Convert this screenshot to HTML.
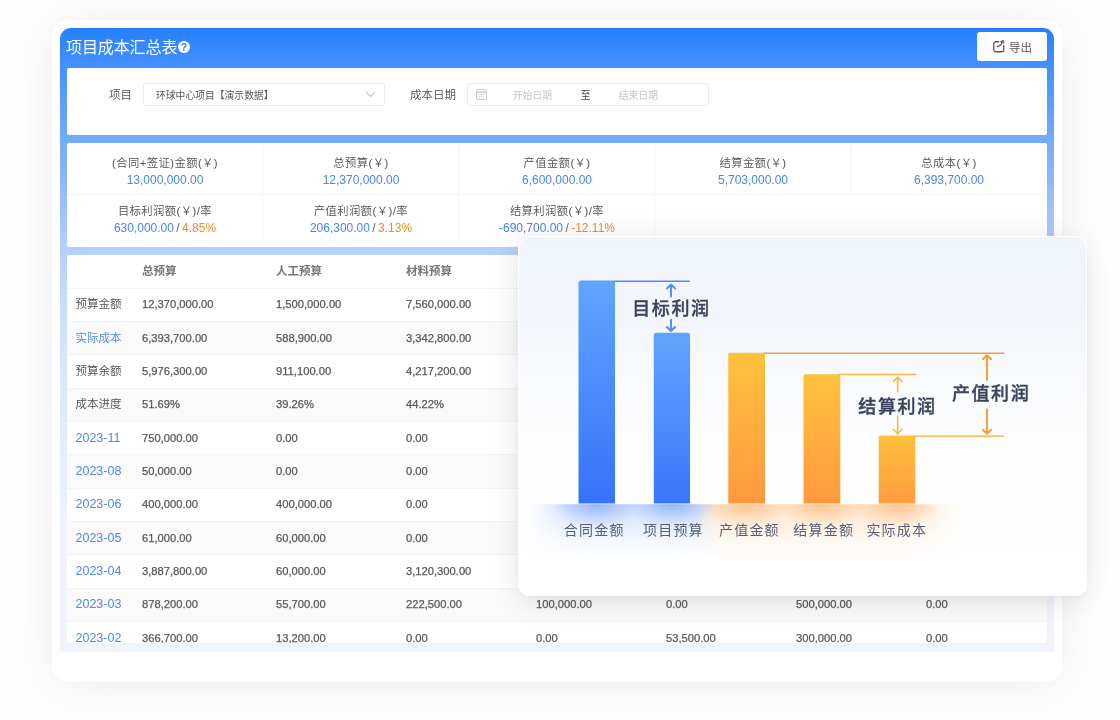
<!DOCTYPE html>
<html lang="zh-CN">
<head>
<meta charset="utf-8">
<title>项目成本汇总表</title>
<style>
*{box-sizing:border-box;margin:0;padding:0}
html,body{width:1120px;height:720px;overflow:hidden;background:#fefefe}
body{position:relative;font-family:"Liberation Sans","Noto Sans CJK SC",sans-serif;color:#555;-webkit-font-smoothing:antialiased}
.abs{position:absolute}
#outer{left:52px;top:20px;width:1010px;height:662px;border-radius:16px;background:#fff;box-shadow:0 3px 50px rgba(0,0,0,.082)}
#panel{left:60px;top:28px;width:994px;height:624px;border-radius:11px 11px 0 0;
 background:linear-gradient(180deg,#2580fe 0px,#4691fd 40px,#74abfb 112px,#b6d0fa 222px,#c5d9fb 262px,#d9e5fb 332px,#e0e9fb 380px,#e9effc 450px,#eef3fc 500px,#f0f4fc 624px)}
#title{left:66px;top:36.3px;height:24px;line-height:24px;font-size:16px;color:#fff;white-space:nowrap;letter-spacing:-.1px}
#help{left:178px;top:41px;width:12px;height:12px;border-radius:50%;background:#fff;color:#2f80fd;font-size:10.5px;font-weight:bold;line-height:12.5px;text-align:center}
#export{left:977px;top:32px;width:70px;height:29px;border-radius:3px;background:#fff;color:#555;font-size:11.5px}
#export span{position:absolute;left:32px;top:1.5px;line-height:29px}
#export svg{position:absolute;left:15px;top:7px}
.card{background:#fff;border-radius:2px}
#filter{left:67px;top:68px;width:980px;height:67px}
.lbl{font-size:11.5px;color:#4f4f4f;font-weight:350;line-height:22px;white-space:nowrap}
.inp{border:1px solid #eaecf0;border-radius:3px;height:23px;background:#fff}
.inp span{position:absolute;top:1px;line-height:21px;font-size:9.8px;white-space:nowrap;text-spacing-trim:space-all;font-kerning:none}
#stats{left:67px;top:143px;width:980px;height:104px}
.st{position:absolute;width:196px;text-align:center;white-space:nowrap}
.st .l{position:absolute;left:0;width:100%;font-size:11.3px;color:#505050;font-weight:350;line-height:16px;letter-spacing:.45px}
.st .v{position:absolute;left:0;width:100%;font-size:12px;color:#4a84f2;line-height:16px}
.st .v i{font-style:normal;color:#666}
.st .v b{font-weight:normal;color:#f38a26}
.vline{position:absolute;top:0;width:1px;background:#f5f6f8}
#table{left:67px;top:255px;width:980px;height:388px;overflow:hidden}
.row{position:absolute;left:0;width:980px;height:33.33px;border-top:1px solid #f3f4f5}
.row.g{background:#fafafa}
.row span{position:absolute;top:-.4px;line-height:33px;font-size:11.2px;color:#585858;white-space:nowrap;-webkit-text-stroke:.25px #585858}
.row span.h{font-weight:bold;color:#777;font-size:11.5px;-webkit-text-stroke:0}
.row span.k{left:8.5px;font-size:11.5px;-webkit-text-stroke:0;font-weight:350;color:#4f4f4f}
.row span.d{left:8.5px;font-size:12.5px;color:#4a86f5;-webkit-text-stroke:0}
.row span.b{color:#4a86f5}
.c1{left:75px}.c2{left:209px}.c3{left:339px}.c4{left:469px}.c5{left:599px}.c6{left:729px}.c7{left:859px}
#ov{left:517.6px;top:236px;width:569px;height:359.6px;border-radius:12px;border:1.6px solid #fff;
 background:linear-gradient(180deg,#f0f4fc 0,#f3f6fb 25%,#fafbfd 45%,#fefefe 60%,#fff 100%);
 box-shadow:0 5px 32px rgba(0,0,0,.11),0 2px 8px rgba(0,0,0,.03)}
#chart{left:518px;top:237px}
</style>
</head>
<body>
<div id="root" style="position:absolute;left:0;top:0;width:1120px;height:720px;will-change:transform;opacity:.9999">
<div id="outer" class="abs"></div>
<div id="panel" class="abs"></div>
<div id="title" class="abs">项目成本汇总表</div>
<div id="help" class="abs">?</div>
<div id="export" class="abs">
<svg width="14" height="14" viewBox="0 0 14 14" fill="none" stroke="#585858" stroke-width="1.3" stroke-linecap="round" stroke-linejoin="round"><path d="M6.8 2.75H3.75a2 2 0 0 0-2 2V10.75a2 2 0 0 0 2 2H9.75a2 2 0 0 0 2-2V6.6"/><path d="M5.4 7.5C7.6 7.2 9.3 5.7 10 3.4"/><path d="M8.5 2.4L11.3 1.2L12 4.1z" fill="#585858" stroke-width=".6"/></svg>
<span>导出</span></div>

<div id="filter" class="abs card">
 <div class="abs lbl" style="left:42px;top:16px">项目</div>
 <div class="abs inp" style="left:76px;top:15.3px;width:241.7px">
  <span style="left:12px;color:#555">环球中心项目【演示数据】</span>
  <svg class="abs" style="left:221px;top:6.7px" width="11" height="7" viewBox="0 0 11 7" fill="none" stroke="#c0c4cc" stroke-width="1.1"><path d="M1 1.2L5.5 5.4L10 1.2"/></svg>
 </div>
 <div class="abs lbl" style="left:343px;top:16px">成本日期</div>
 <div class="abs inp" style="left:399.8px;top:15.3px;width:242.2px">
  <svg class="abs" style="left:8px;top:5px" width="11" height="11" viewBox="0 0 11 11" fill="none" stroke="#c3c7cf" stroke-width="1"><rect x=".5" y=".8" width="10" height="9.6" rx=".8"/><path d="M.5 3.2H10.5" stroke-width="1.3"/><path d="M2.6 5.6H8.4M2.6 7.8H8.4" stroke-dasharray="1.4 .8" stroke-width=".9"/></svg>
  <span style="left:45px;color:#c3c6cc">开始日期</span>
  <span style="left:113px;color:#444">至</span>
  <span style="left:151px;color:#c3c6cc">结束日期</span>
 </div>
</div>

<div id="stats" class="abs card">
 <div class="vline" style="left:195px;height:103px"></div>
 <div class="vline" style="left:391px;height:103px"></div>
 <div class="vline" style="left:587px;height:103px"></div>
 <div class="vline" style="left:783px;height:52px"></div>
 <div class="abs" style="left:0;top:51px;width:980px;height:1px;background:#f5f6f8"></div>
 <div class="st" style="left:0;top:0"><div class="l" style="top:12px">(合同+签证)金额(￥)</div><div class="v" style="top:29px">13,000,000.00</div></div>
 <div class="st" style="left:196px;top:0"><div class="l" style="top:12px">总预算(￥)</div><div class="v" style="top:29px">12,370,000.00</div></div>
 <div class="st" style="left:392px;top:0"><div class="l" style="top:12px">产值金额(￥)</div><div class="v" style="top:29px">6,600,000.00</div></div>
 <div class="st" style="left:588px;top:0"><div class="l" style="top:12px">结算金额(￥)</div><div class="v" style="top:29px">5,703,000.00</div></div>
 <div class="st" style="left:784px;top:0"><div class="l" style="top:12px">总成本(￥)</div><div class="v" style="top:29px">6,393,700.00</div></div>
 <div class="st" style="left:0;top:0"><div class="l" style="top:60px">目标利润额(￥)/率</div><div class="v" style="top:77px">630,000.00<i>&#8201;/&#8201;</i><b>4.85%</b></div></div>
 <div class="st" style="left:196px;top:0"><div class="l" style="top:60px">产值利润额(￥)/率</div><div class="v" style="top:77px">206,300.00<i>&#8201;/&#8201;</i><b>3.13%</b></div></div>
 <div class="st" style="left:392px;top:0"><div class="l" style="top:60px">结算利润额(￥)/率</div><div class="v" style="top:77px">-690,700.00<i>&#8201;/&#8201;</i><b>-12.11%</b></div></div>
</div>

<div id="table" class="abs card">
 <div class="row" style="top:0;border-top:0"><span class="h c1">总预算</span><span class="h c2">人工预算</span><span class="h c3">材料预算</span><span class="h c4">机械预算</span><span class="h c5">分包预算</span><span class="h c6">间接费预算</span><span class="h c7">其他预算</span></div>
 <div class="row" style="top:32.60px"><span class="k">预算金额</span><span class="c1">12,370,000.00</span><span class="c2">1,500,000.00</span><span class="c3">7,560,000.00</span><span class="c4">850,000.00</span><span class="c5">1,460,000.00</span><span class="c6">1,000,000.00</span><span class="c7">0.00</span></div>
 <div class="row g" style="top:65.93px"><span class="k b">实际成本</span><span class="c1">6,393,700.00</span><span class="c2">588,900.00</span><span class="c3">3,342,800.00</span><span class="c4">308,500.00</span><span class="c5">853,500.00</span><span class="c6">1,300,000.00</span><span class="c7">0.00</span></div>
 <div class="row" style="top:99.26px"><span class="k">预算余额</span><span class="c1">5,976,300.00</span><span class="c2">911,100.00</span><span class="c3">4,217,200.00</span><span class="c4">541,500.00</span><span class="c5">606,500.00</span><span class="c6">-300,000.00</span><span class="c7">0.00</span></div>
 <div class="row g" style="top:132.59px"><span class="k">成本进度</span><span class="c1">51.69%</span><span class="c2">39.26%</span><span class="c3">44.22%</span><span class="c4">36.29%</span><span class="c5">58.46%</span><span class="c6">130.00%</span><span class="c7">0.00%</span></div>
 <div class="row" style="top:165.92px"><span class="d">2023-11</span><span class="c1">750,000.00</span><span class="c2">0.00</span><span class="c3">0.00</span><span class="c4">0.00</span><span class="c5">750,000.00</span><span class="c6">0.00</span><span class="c7">0.00</span></div>
 <div class="row g" style="top:199.25px"><span class="d">2023-08</span><span class="c1">50,000.00</span><span class="c2">0.00</span><span class="c3">0.00</span><span class="c4">0.00</span><span class="c5">50,000.00</span><span class="c6">0.00</span><span class="c7">0.00</span></div>
 <div class="row" style="top:232.58px"><span class="d">2023-06</span><span class="c1">400,000.00</span><span class="c2">400,000.00</span><span class="c3">0.00</span><span class="c4">0.00</span><span class="c5">0.00</span><span class="c6">0.00</span><span class="c7">0.00</span></div>
 <div class="row g" style="top:265.91px"><span class="d">2023-05</span><span class="c1">61,000.00</span><span class="c2">60,000.00</span><span class="c3">0.00</span><span class="c4">1,000.00</span><span class="c5">0.00</span><span class="c6">0.00</span><span class="c7">0.00</span></div>
 <div class="row" style="top:299.24px"><span class="d">2023-04</span><span class="c1">3,887,800.00</span><span class="c2">60,000.00</span><span class="c3">3,120,300.00</span><span class="c4">207,500.00</span><span class="c5">0.00</span><span class="c6">500,000.00</span><span class="c7">0.00</span></div>
 <div class="row g" style="top:332.57px"><span class="d">2023-03</span><span class="c1">878,200.00</span><span class="c2">55,700.00</span><span class="c3">222,500.00</span><span class="c4">100,000.00</span><span class="c5">0.00</span><span class="c6">500,000.00</span><span class="c7">0.00</span></div>
 <div class="row" style="top:365.90px"><span class="d">2023-02</span><span class="c1">366,700.00</span><span class="c2">13,200.00</span><span class="c3">0.00</span><span class="c4">0.00</span><span class="c5">53,500.00</span><span class="c6">300,000.00</span><span class="c7">0.00</span></div>
</div>

<div id="ov" class="abs"></div>
<svg id="chart" class="abs" width="569" height="359" viewBox="518 237 569 359">
<defs>
<linearGradient id="gb" x1="0" y1="0" x2="0" y2="1"><stop offset="0" stop-color="#5fa5fd"/><stop offset="1" stop-color="#3672fb"/></linearGradient>
<linearGradient id="gb2" x1="0" y1="0" x2="0" y2="1"><stop offset="0" stop-color="#5fa5fd"/><stop offset="1" stop-color="#3a76fb"/></linearGradient>
<linearGradient id="go" x1="0" y1="0" x2="0" y2="1"><stop offset="0" stop-color="#ffc23b"/><stop offset="1" stop-color="#ff9840"/></linearGradient>
<linearGradient id="go5" x1="0" y1="0" x2="0" y2="1"><stop offset="0" stop-color="#ffc03b"/><stop offset="1" stop-color="#ff9c40"/></linearGradient>
<linearGradient id="gl" x1="0" y1="0" x2="1" y2="0"><stop offset="0" stop-color="#5b8ffb"/><stop offset=".385" stop-color="#5b8ffb"/><stop offset=".44" stop-color="#ffa24a"/><stop offset="1" stop-color="#ffa24a"/></linearGradient>
<linearGradient id="mv" x1="0" y1="0" x2="0" y2="1"><stop offset="0" stop-color="#fff" stop-opacity=".30"/><stop offset=".35" stop-color="#fff" stop-opacity=".17"/><stop offset=".7" stop-color="#fff" stop-opacity=".06"/><stop offset="1" stop-color="#fff" stop-opacity="0"/></linearGradient>
<linearGradient id="mh" x1="0" y1="0" x2="1" y2="0"><stop offset="0" stop-color="#000"/><stop offset=".10" stop-color="#fff"/><stop offset=".88" stop-color="#fff"/><stop offset="1" stop-color="#000"/></linearGradient>
<mask id="mk1" maskUnits="userSpaceOnUse" x="528" y="504" width="432" height="54"><rect x="528" y="504" width="432" height="54" fill="url(#mv)"/></mask>
<mask id="mk2" maskUnits="userSpaceOnUse" x="528" y="504" width="432" height="54"><rect x="528" y="504" width="432" height="54" fill="url(#mh)"/></mask>
<radialGradient id="rb"><stop offset="0" stop-color="#4d84fb" stop-opacity=".45"/><stop offset=".5" stop-color="#4d84fb" stop-opacity=".2"/><stop offset="1" stop-color="#4d84fb" stop-opacity="0"/></radialGradient>
<radialGradient id="ro"><stop offset="0" stop-color="#ff9a3e" stop-opacity=".45"/><stop offset=".5" stop-color="#ff9a3e" stop-opacity=".2"/><stop offset="1" stop-color="#ff9a3e" stop-opacity="0"/></radialGradient>
<clipPath id="cp"><rect x="518" y="504.3" width="569" height="80"/></clipPath>
</defs>
<g clip-path="url(#cp)">
<g mask="url(#mk2)"><g mask="url(#mk1)"><rect x="528" y="504" width="432" height="54" fill="url(#gl)"/></g></g>
<ellipse cx="596.8" cy="504" rx="44" ry="24" fill="url(#rb)"/>
<ellipse cx="671.8" cy="504" rx="44" ry="24" fill="url(#rb)"/>
<ellipse cx="746.8" cy="504" rx="44" ry="24" fill="url(#ro)"/>
<ellipse cx="821.8" cy="504" rx="44" ry="24" fill="url(#ro)"/>
<ellipse cx="896.8" cy="504" rx="44" ry="24" fill="url(#ro)"/>
</g>
<path d="M578.5 503.6V283.0a2.5 2.5 0 0 1 2.5-2.5H612.5a2.5 2.5 0 0 1 2.5 2.5V503.6z" fill="url(#gb)"/>
<path d="M653.8 503.6V335.2a2.5 2.5 0 0 1 2.5-2.5H687.5a2.5 2.5 0 0 1 2.5 2.5V503.6z" fill="url(#gb2)"/>
<path d="M728.3 503.6V353.8a1 1 0 0 1 1-1H764a1 1 0 0 1 1 1V503.6z" fill="url(#go)"/>
<path d="M803.5 503.6V376.2a2 2 0 0 1 2-2H838.3a2 2 0 0 1 2 2V503.6z" fill="url(#go)"/>
<path d="M878.7 503.6V436.9a1.5 1.5 0 0 1 1.5-1.5H913.8a1.5 1.5 0 0 1 1.5 1.5V503.6z" fill="url(#go5)"/>
<g fill="none" stroke-linecap="round" stroke-linejoin="round">
<path d="M614 281.3H689.2" stroke="#4a8bfb" stroke-width="1.4"/>
<g stroke="#4a8bfb" stroke-width="1.9"><path d="M671.0 296.6V284.5M666.9 288.5L671.0 284.5L675.1 288.5"/><path d="M671.0 319.6V331.0M666.9 327.0L671.0 331.0L675.1 327.0"/></g>
<path d="M764 353.2H1003.8" stroke="#f99f30" stroke-width="1.4"/>
<path d="M914.5 436.1H1003.8" stroke="#fbaa34" stroke-width="1.4"/>
<path d="M839 374.5H915.6" stroke="#fbb83c" stroke-width="1.4"/>
<g stroke="#fbb93a" stroke-width="1.6"><path d="M897.7 391.8V377.3M893.4 381.5L897.7 377.3L902.0 381.5"/><path d="M897.7 416.2V433.7M893.4 429.5L897.7 433.7L902.0 429.5"/></g>
<g stroke="#f99b2d" stroke-width="1.9"><path d="M987.0 379.8V355.2M982.9 359.2L987.0 355.2L991.1 359.2"/><path d="M987.0 409.1V433.7M982.9 429.7L987.0 433.7L991.1 429.7"/></g>
</g>
<g font-family="'Liberation Sans','Noto Sans CJK SC',sans-serif" font-weight="500" fill="#3b435f" stroke="#3b435f" stroke-width=".35" font-size="18" letter-spacing="1.6">
<text x="632.2" y="315.2">目标利润</text>
<text x="858.3" y="412.7">结算利润</text>
<text x="951.9" y="400.2">产值利润</text>
</g>
<g font-family="'Liberation Sans','Noto Sans CJK SC',sans-serif" fill="#565f75" font-size="14" letter-spacing="1.2" text-anchor="middle">
<text x="594.2" y="534.8">合同金额</text>
<text x="673.4" y="534.8">项目预算</text>
<text x="749.4" y="534.8">产值金额</text>
<text x="823.7" y="534.8">结算金额</text>
<text x="896.8" y="534.8">实际成本</text>
</g>
</svg>
</div>
</body>
</html>
